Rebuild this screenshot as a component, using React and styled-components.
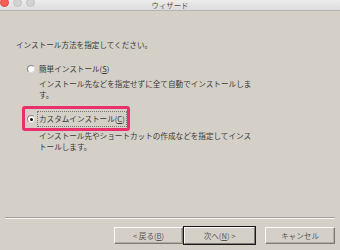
import React from 'react'
import styled, { createGlobalStyle } from 'styled-components'

const Global = createGlobalStyle`
  html, body {
    margin: 0;
    padding: 0;
    background: #d4d0c8;
  }
  body {
    font-family: "Noto Sans CJK JP", "Noto Sans", sans-serif;
    color: #3a3836;
  }
`;

const Window = styled.div`
  width: 340px;
  height: 250px;
  display: flex;
  flex-direction: column;
  background: #d4d0c8;
  overflow: hidden;
`;

const TitleBar = styled.div`
  height: 10px;
  flex-shrink: 0;
  display: grid;
  grid-template-columns: 1fr auto 1fr;
  align-items: start;
  background: linear-gradient(#ececec, #dcdcdc);
  border-bottom: 1px solid #b6b4b0;
  overflow: hidden;
`;

const Lights = styled.div`
  display: flex;
  gap: 4px;
  margin-top: -2px;
`;

const Light = styled.span`
  width: 9px;
  height: 9px;
  border-radius: 50%;
  box-sizing: border-box;
  background: ${({ $color }) => $color};
  border: 1px solid ${({ $edge }) => $edge};
`;

const Title = styled.div`
  font-size: 7.4px;
  line-height: 10px;
  color: #4e4e4e;
`;

const Content = styled.div`
  flex: 1;
  padding: 0 16px;
  font-size: 7.6px;
  line-height: 11px;
`;

const Prompt = styled.div`
  margin-top: 28px;
`;

const Option = styled.div`
  position: relative;
  display: flex;
  align-items: center;
  gap: 2px;
  margin-left: 11px;
  margin-top: ${({ $top }) => $top}px;
  height: 16px;
`;

const Radio = styled.span`
  position: relative;
  width: 8px;
  height: 8px;
  box-sizing: border-box;
  border-radius: 50%;
  background: #fbfbfb;
  border: 1px solid #8a8784;
  border-right-color: #dcdad6;
  border-bottom-color: #dcdad6;
  flex-shrink: 0;

  &::after {
    content: '';
    display: ${({ $checked }) => ($checked ? 'block' : 'none')};
    position: absolute;
    left: 1.5px;
    top: 1.5px;
    width: 3px;
    height: 3px;
    border-radius: 50%;
    background: #111;
  }
`;

const Label = styled.span`
  box-sizing: border-box;
  height: 16px;
  line-height: 14px;
  padding: 0 1px;
  border: 1px ${({ $focused }) => ($focused ? 'dotted #7a7874' : 'solid transparent')};
  white-space: nowrap;
`;

const Key = styled.span`
  text-decoration: underline;
`;

const Highlight = styled.span`
  position: absolute;
  left: -5px;
  top: -5px;
  width: 108px;
  height: 25px;
  box-sizing: border-box;
  border: 3px solid #ea2f6d;
  border-radius: 3px;
  pointer-events: none;
`;

const Description = styled.p`
  margin: ${({ $top }) => $top}px 0 0 23px;
  width: 216px;
  line-break: normal;
`;

const Footer = styled.div`
  flex-shrink: 0;
  padding-bottom: 6px;
`;

const Separator = styled.div`
  margin: 0 5px;
  height: 1px;
  background: #a4a19c;
  border-bottom: 1px solid #f6f5f2;
`;

const Buttons = styled.div`
  display: flex;
  justify-content: flex-end;
  margin-top: 8px;
  padding-right: 5px;
`;

const Button = styled.button`
  width: ${({ $w }) => $w}px;
  height: 17px;
  margin-left: ${({ $gap }) => $gap || 0}px;
  padding: 0;
  box-sizing: border-box;
  font-family: inherit;
  font-size: 7.6px;
  line-height: 13px;
  color: #5a5855;
  background: #d4d0c8;
  border: 1px solid;
  border-color: #fbfaf8 #7e7b77 #7e7b77 #fbfaf8;
  box-shadow: ${({ $primary }) => ($primary ? '0 0 0 1px #1a1a1a' : 'inset -1px -1px 0 #b0ada8')};
  ${({ $primary }) => $primary && 'position: relative; z-index: 1; margin-left: 1px;'}
`;

export default function App() {
  return (
    <>
      <Global />
      <Window>
        <TitleBar>
          <Lights>
            <Light $color="#fd5e56" $edge="#e2463f" />
            <Light $color="#d2d2d2" $edge="#c2c2c2" />
            <Light $color="#d2d2d2" $edge="#c2c2c2" />
          </Lights>
          <Title>ウィザード</Title>
          <span />
        </TitleBar>

        <Content>
          <Prompt>インストール方法を指定してください。</Prompt>

          <Option $top={11}>
            <Radio />
            <Label>簡単インストール(<Key>S</Key>)</Label>
          </Option>
          <Description $top={1}>
            インストール先などを指定せずに全て自動でインストールします。
          </Description>

          <Option $top={11}>
            <Radio $checked />
            <Label $focused>カスタムインストール(<Key>C</Key>)</Label>
            <Highlight />
          </Option>
          <Description $top={3}>
            インストール先やショートカットの作成などを指定してインストールします。
          </Description>
        </Content>

        <Footer>
          <Separator />
          <Buttons>
            <Button $w={69}>&lt; 戻る(<Key>B</Key>)</Button>
            <Button $w={71} $primary>次へ(<Key>N</Key>) &gt;</Button>
            <Button $w={70} $gap={10}>キャンセル</Button>
          </Buttons>
        </Footer>
      </Window>
    </>
  )
}
